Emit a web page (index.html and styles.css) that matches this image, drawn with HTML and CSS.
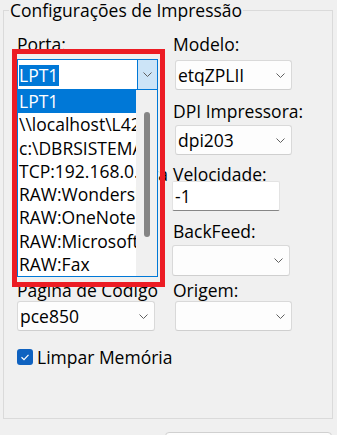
FILE: index.html
```html
<!DOCTYPE html>
<html lang="pt-BR">
  <head>
    <meta charset="UTF-8" />
    <title>Configurações de Impressão</title>
    <link rel="stylesheet" href="styles.css">
  </head>
  <body>
    <fieldset class="group">
      <legend>Configurações de Impressão</legend>
      <div class="fields">
        <!-- linha 1 -->
        <div class="field field-porta">
          <label>Porta:</label>
          <div class="combo combo-focus">
            <span class="combo-text"><span class="selected">LPT1</span></span>
            <span class="combo-button">
              <svg width="9" height="5" viewBox="0 0 9 5"><path d="M0.5 0.5 L4.5 4.5 L8.5 0.5" fill="none" stroke="#5f5f5f" /></svg>
            </span>
            <div class="drop-list">
              <ul class="drop-items">
                <li class="active">LPT1</li>
                <li>\\localhost\L42</li>
                <li>c:\DBRSISTEMAS</li>
                <li>TCP:192.168.0.10</li>
                <li>RAW:Wondershare</li>
                <li>RAW:OneNote</li>
                <li>RAW:Microsoft</li>
                <li>RAW:Fax</li>
              </ul>
              <div class="scrollbar"><div class="thumb"></div></div>
            </div>
            <div class="mark"></div>
          </div>
        </div>
        <div class="field field-modelo">
          <label>Modelo:</label>
          <div class="combo">
            <span class="combo-text">etqZPLII</span>
            <svg width="9" height="5" viewBox="0 0 9 5"><path d="M0.5 0.5 L4.5 4.5 L8.5 0.5" fill="none" stroke="#606060" /></svg>
          </div>
        </div>

        <!-- linha 2 -->
        <div class="field"></div>
        <div class="field field-dpi">
          <label>DPI Impressora:</label>
          <div class="combo">
            <span class="combo-text">dpi203</span>
            <svg width="9" height="5" viewBox="0 0 9 5"><path d="M0.5 0.5 L4.5 4.5 L8.5 0.5" fill="none" stroke="#606060" /></svg>
          </div>
        </div>

        <!-- linha 3 -->
        <div class="field field-temp">
          <label>Temperatura</label>
        </div>
        <div class="field field-velocidade">
          <label>Velocidade:</label>
          <div class="textbox">-1</div>
        </div>

        <!-- linha 4 -->
        <div class="field"></div>
        <div class="field field-backfeed">
          <label>BackFeed:</label>
          <div class="combo">
            <span class="combo-text"></span>
            <svg width="9" height="5" viewBox="0 0 9 5"><path d="M0.5 0.5 L4.5 4.5 L8.5 0.5" fill="none" stroke="#606060" /></svg>
          </div>
        </div>

        <!-- linha 5 -->
        <div class="field field-pagina">
          <label>Página de Código</label>
          <div class="combo">
            <span class="combo-text">pce850</span>
            <svg width="9" height="5" viewBox="0 0 9 5"><path d="M0.5 0.5 L4.5 4.5 L8.5 0.5" fill="none" stroke="#606060" /></svg>
          </div>
        </div>
        <div class="field field-origem">
          <label>Origem:</label>
          <div class="combo">
            <span class="combo-text"></span>
            <svg width="9" height="5" viewBox="0 0 9 5"><path d="M0.5 0.5 L4.5 4.5 L8.5 0.5" fill="none" stroke="#606060" /></svg>
          </div>
        </div>
      </div>

      <label class="check">
        <span class="check-box">
          <svg width="16" height="16" viewBox="0 0 16 16"><path d="M4.5 8.3 L7 10.6 L11.5 5.8" fill="none" stroke="#fff" stroke-width="1.2" /></svg>
        </span>
        Limpar Memória
      </label>
    </fieldset>

    <div class="actions">
      <button class="button"></button>
    </div>
  </body>
</html>
```

FILE: styles.css
```css
* {
  box-sizing: border-box;
}

body {
  margin: 0;
  height: 435px;
  overflow: hidden;
  background: #f0f0f0;
  color: #000;
  font-family: "Open Sans", "Noto Sans", sans-serif;
  font-size: 17.5px;
}

.group {
  width: 330px;
  min-width: 0;
  margin: 0 0 0 3px;
  padding: 13px 0 50px 13px;
  border: 1px solid #dadada;
}
.group legend {
  margin-left: -8px;
  padding: 0 1px;
  line-height: 20px;
}

.fields {
  display: grid;
  grid-template-columns: 156px 1fr;
  grid-template-rows: 67px 63px 57px 59px 52px;
}
.field {
  display: flex;
  flex-direction: column;
  align-items: flex-start;
}
.field label {
  height: 22px;
  line-height: 22px;
  white-space: nowrap;
}

/* combobox */
.combo {
  position: relative;
  display: flex;
  align-items: center;
  width: 117px;
  height: 30px;
  padding: 0 6px 0 2px;
  background: #fdfdfd;
  border: 1px solid #d9d9d9;
  border-bottom-color: #cfcfcf;
  border-radius: 3px;
}
.combo-text {
  flex: 1;
  white-space: nowrap;
}

.field-porta .combo {
  margin-top: 4px;
  width: 141px;
  height: 31px;
  padding: 0;
  background: #fff;
  border: 1px solid #0078d7;
  border-radius: 0;
  z-index: 2;
}
.field-porta .combo-text {
  padding-left: 1px;
}
.selected {
  display: inline-block;
  line-height: 21px;
  padding: 0 1px 0 0;
  background: #0078d7;
  color: #fff;
}
.combo-button {
  display: flex;
  align-items: center;
  justify-content: center;
  align-self: stretch;
  width: 20px;
  background: #cce4f7;
  border-left: 1px solid #0078d7;
}

.drop-list {
  position: absolute;
  left: -1px;
  top: 29px;
  display: flex;
  width: 141px;
  height: 188px;
  background: #fff;
  border: 1px solid #0078d7;
}
.drop-items {
  flex: 1;
  margin: 0;
  padding: 0;
  list-style: none;
  overflow: hidden;
}
.drop-items li {
  height: 23.25px;
  line-height: 23.25px;
  padding-left: 1px;
  white-space: nowrap;
  overflow: hidden;
}
.drop-items li.active {
  background: #0078d7;
  color: #fff;
}
.scrollbar {
  width: 21px;
  background: #f0f0f0;
  display: flex;
  justify-content: center;
}
.thumb {
  width: 6px;
  height: 125px;
  margin-top: 22px;
  background: #858585;
  border-radius: 3px;
}

/* marcação vermelha */
.mark {
  position: absolute;
  left: -6px;
  top: -11px;
  width: 153px;
  height: 238px;
  border: 5px solid #ec1c24;
  pointer-events: none;
}

.field-modelo .combo {
  margin: 5px 0 0 2px;
}
.field-dpi .combo {
  margin: 3px 0 0 2px;
}

.field-temp {
  align-items: flex-end;
  padding-right: 5px;
}

.textbox {
  width: 108px;
  height: 30px;
  margin: -4px 0 0 -1px;
  padding-left: 2px;
  line-height: 28px;
  background: #fff;
  border: 1px solid #e3e3e3;
  border-bottom-color: #868686;
  border-radius: 2px;
}

.field-backfeed .combo {
  width: 118px;
  height: 31px;
  margin: 3px 0 0 -1px;
}
.field-pagina .combo {
  width: 138px;
}
.field-origem .combo {
  margin-left: 2px;
}

.check {
  display: flex;
  align-items: center;
  gap: 4px;
  height: 22px;
  margin-top: 15px;
}
.check-box {
  display: flex;
  width: 16px;
  height: 16px;
  background: #0f62c0;
  border-radius: 3px;
}

.actions {
  padding: 13px 0 0 165px;
}
.button {
  display: block;
  width: 167px;
  height: 30px;
  background: #fdfdfd;
  border: 1px solid #d0d0d0;
  border-radius: 4px;
}
```
